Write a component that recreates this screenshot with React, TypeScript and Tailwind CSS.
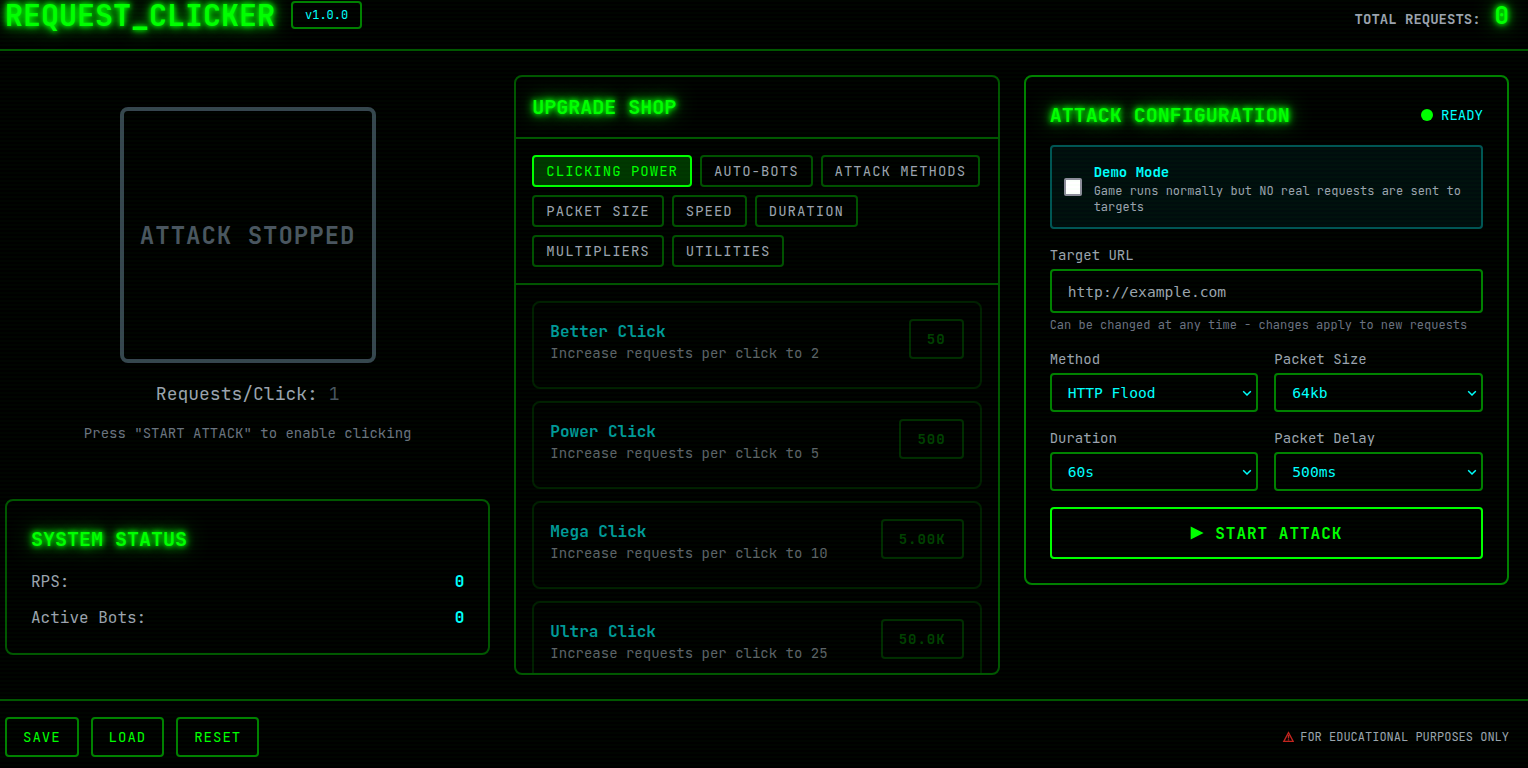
import type { ReactNode } from "react";

const TABS = [
  "CLICKING POWER",
  "AUTO-BOTS",
  "ATTACK METHODS",
  "PACKET SIZE",
  "SPEED",
  "DURATION",
  "MULTIPLIERS",
  "UTILITIES",
];

const UPGRADES = [
  { name: "Better Click", text: "Increase requests per click to 2", price: "50" },
  { name: "Power Click", text: "Increase requests per click to 5", price: "500" },
  { name: "Mega Click", text: "Increase requests per click to 10", price: "5.00K" },
  { name: "Ultra Click", text: "Increase requests per click to 25", price: "50.0K" },
];

const GLOW = "[text-shadow:0_0_5px_#00ff00,0_0_10px_#00ff00,0_0_20px_rgba(0,255,0,0.8)]";

function Heading({ children }: { children: ReactNode }) {
  return <h2 className={`text-xl font-bold text-[#00ff00] ${GLOW}`}>{children}</h2>;
}

function StatusRow({ label, value }: { label: string; value: string }) {
  return (
    <div className="-mb-px flex justify-between pt-px">
      <span className="text-[#9ca3af]">{label}</span>
      <span className="font-bold text-[#00ffff]">{value}</span>
    </div>
  );
}

function SelectField({ label, value }: { label: string; value: string }) {
  return (
    <div className="flex flex-col gap-1">
      <label className="text-sm text-[#9ca3af]">{label}</label>
      <button className="flex h-[39px] items-center justify-between rounded border-2 border-[#008000] bg-black pr-1 pl-4 font-[Consolas,'DejaVu_Sans_Mono',monospace] text-[14.6px] text-[#00ffff]">
        {value}
        <svg className="size-[10px]" viewBox="0 0 10 10" fill="none" stroke="currentColor" strokeWidth="1.5">
          <path d="M1.2 3.2 5 7l3.8-3.8" />
        </svg>
      </button>
    </div>
  );
}

export default function App() {
  return (
    <div className="relative flex h-screen flex-col overflow-hidden bg-black font-['JetBrains_Mono','Noto_Sans_Mono','DejaVu_Sans_Mono',monospace] text-base">
      <header className="flex h-[51px] shrink-0 items-center justify-between border-b-2 border-[#005500] pr-[19px] pb-[19px] pl-[5px]">
        <div className="flex items-center gap-4">
          <h1 className={`text-3xl leading-[30px] font-bold text-[#00ff00] ${GLOW}`}>REQUEST_CLICKER</h1>
          <span className="rounded border-2 border-[#008000] px-3 py-1 text-xs text-[#00ffff]">v1.0.0</span>
        </div>
        <div className="flex items-baseline gap-[14px] pt-[2px]">
          <span className="text-sm font-semibold text-[#9ca3af]">TOTAL REQUESTS:</span>
          <span className={`text-2xl leading-7 font-bold text-[#00ff00] ${GLOW}`}>0</span>
        </div>
      </header>

      <main className="grid h-[648px] shrink-0 grid-cols-3 gap-6 py-6 pr-[19px] pl-[5px]">
        <div className="flex flex-col gap-6">
          <section className="flex flex-col items-center py-8">
            <button className="size-64 rounded-lg border-4 border-[#36454f] pt-[2px] text-2xl font-semibold tracking-[1px] whitespace-nowrap text-[#4a5560]">
              ATTACK STOPPED
            </button>
            <p className="mt-[17px] text-lg text-[#9ca3af]">
              Requests/Click: <span className="text-[#4a5560]">1</span>
            </p>
            <p className="mt-[15px] text-sm text-[#6b7280]">Press "START ATTACK" to enable clicking</p>
          </section>
          <section className="flex flex-col gap-3 rounded-lg border-2 border-[#005500] p-6">
            <div className="mb-1">
              <Heading>SYSTEM STATUS</Heading>
            </div>
            <StatusRow label="RPS:" value="0" />
            <StatusRow label="Active Bots:" value="0" />
          </section>
        </div>

        <section className="flex h-[600px] flex-col overflow-hidden rounded-lg border-2 border-[#005500]">
          <div className="border-b-2 border-[#005500] p-4">
            <Heading>UPGRADE SHOP</Heading>
          </div>
          <div className="flex flex-wrap gap-2 border-b-2 border-[#005500] py-4 pr-3 pl-4">
            {TABS.map((tab, i) => (
              <button
                key={tab}
                className={`h-8 rounded border-2 px-3 text-sm leading-5 tracking-[1px] ${
                  i === 0 ? "border-[#00ff00] bg-[#003500] text-[#00ff00]" : "border-[#005000] text-[#9ca3af]"
                }`}
              >
                {tab}
              </button>
            ))}
          </div>
          <div className="flex min-h-0 flex-1 flex-col gap-3 overflow-hidden p-4">
            {UPGRADES.map((u) => (
              <article
                key={u.name}
                className="flex h-[88px] shrink-0 items-start justify-between rounded-lg border-2 border-[#001f00] p-4"
              >
                <div>
                  <h3 className="-mb-px pt-px font-bold text-[#009999]">{u.name}</h3>
                  <p className="text-sm text-[#5e6269]">{u.text}</p>
                </div>
                <button className="h-10 rounded border-2 border-[#002c00] px-4 text-sm font-semibold tracking-[1px] text-[#004000]">
                  {u.price}
                </button>
              </article>
            ))}
          </div>
        </section>

        <section className="flex flex-col gap-4 self-start rounded-lg border-2 border-[#008000] p-6">
          <div className="flex items-center justify-between">
            <Heading>ATTACK CONFIGURATION</Heading>
            <div className="flex items-center gap-2 text-sm text-[#00ffff]">
              <span className="size-3 rounded-full bg-[#00ff00]" />
              READY
            </div>
          </div>

          <label className="flex items-center gap-3 rounded border-2 border-[#005555] bg-[#000d0d] p-3">
            <span className="size-[18px] shrink-0 rounded-[2px] border-2 border-[#8b8b99] bg-white" />
            <span className="flex flex-col">
              <span className="-mb-px pt-px text-sm leading-6 font-bold text-[#00ffff]">Demo Mode</span>
              <span className="text-xs text-[#9ca3af]">
                Game runs normally but NO real requests are sent to targets
              </span>
            </span>
          </label>

          <div className="flex flex-col gap-1">
            <label className="text-sm text-[#9ca3af]">Target URL</label>
            <input
              className="h-11 rounded border-2 border-[#008000] bg-black px-4 font-[Consolas,'DejaVu_Sans_Mono',monospace] text-[14.63px] text-[#00ffff] placeholder:text-[#9ca3af]"
              placeholder="http://example.com"
            />
            <p className="text-xs text-[#6b7280]">Can be changed at any time - changes apply to new requests</p>
          </div>

          <div className="grid grid-cols-2 gap-4">
            <SelectField label="Method" value="HTTP Flood" />
            <SelectField label="Packet Size" value="64kb" />
            <SelectField label="Duration" value="60s" />
            <SelectField label="Packet Delay" value="500ms" />
          </div>

          <button className="flex h-[52px] items-center justify-center gap-[11px] rounded border-2 border-[#00ff00] font-bold tracking-[1px] text-[#00ff00]">
            <svg className="size-[14px]" viewBox="0 0 14 14" fill="currentColor">
              <path d="M.7.6 13.6 7 .7 13.4z" />
            </svg>
            <span className="pt-[2px]">START ATTACK</span>
          </button>
        </section>
      </main>

      <footer className="flex shrink-0 items-center justify-between border-t-2 border-[#005500] py-4 pr-[19px] pl-[5px]">
        <div className="flex gap-3">
          {["SAVE", "LOAD", "RESET"].map((name) => (
            <button
              key={name}
              className="h-10 rounded border-2 border-[#008000] px-4 text-sm font-normal tracking-[1px] text-[#00ff00]"
            >
              {name}
            </button>
          ))}
        </div>
        <div className="flex items-center gap-[6px] text-xs text-[#9ca3af]">
          <svg className="size-3" viewBox="0 0 12 12" fill="none" stroke="#c5221f">
            <path d="M6.5 1.6 11.2 10.4H1.8z" strokeWidth="1.3" />
            <path d="M6.5 4v3.4M6.5 8.2v1.2" strokeWidth="1.4" />
          </svg>
          FOR EDUCATIONAL PURPOSES ONLY
        </div>
      </footer>

      <div className="pointer-events-none absolute inset-0 bg-[repeating-linear-gradient(0deg,transparent_0px,transparent_2px,rgba(0,255,0,0.02)_2px,rgba(0,255,0,0.02)_4px)]" />
    </div>
  );
}
